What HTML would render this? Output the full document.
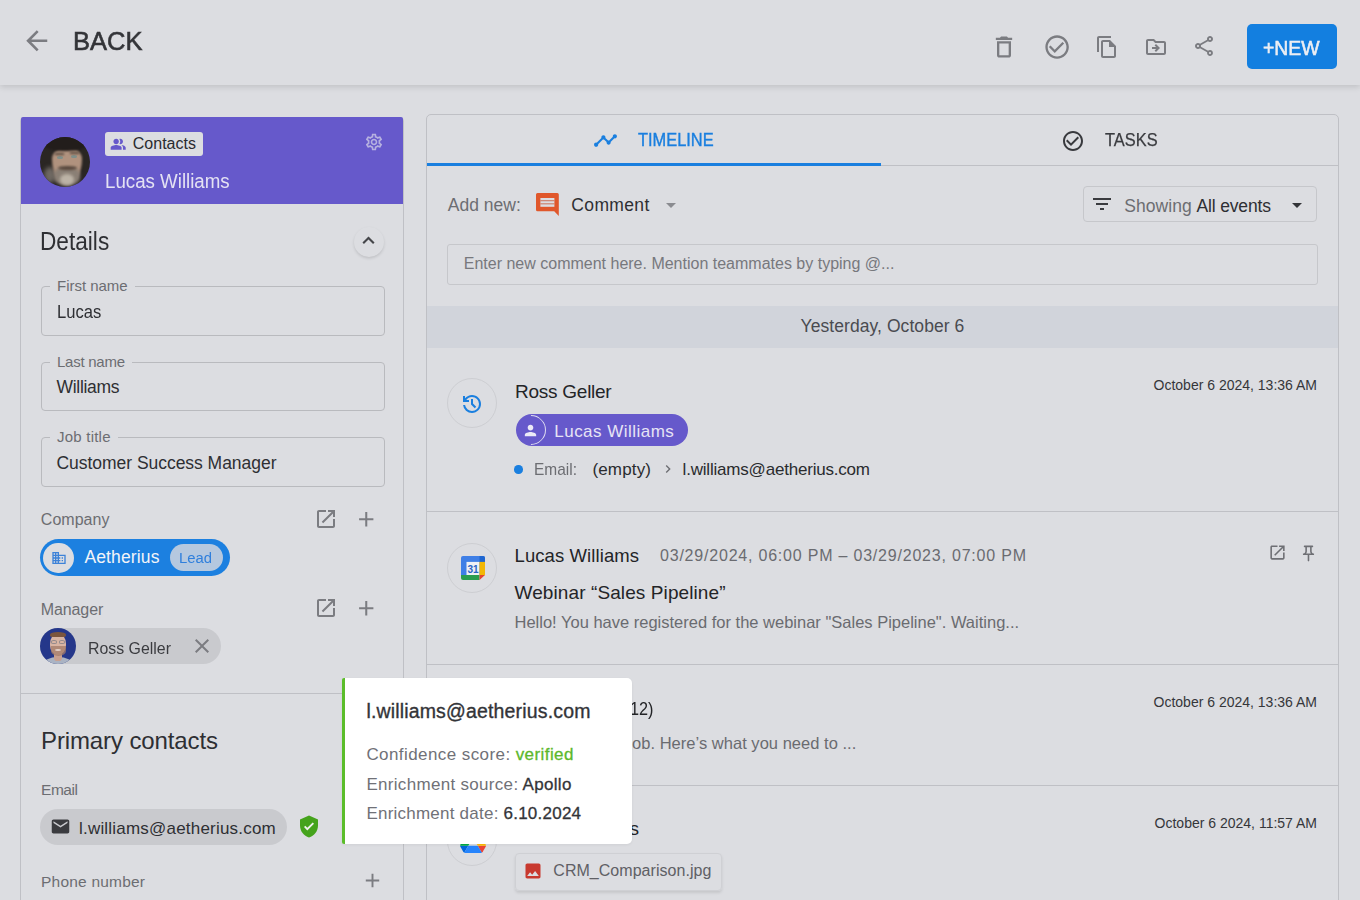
<!DOCTYPE html>
<html><head><meta charset="utf-8"><style>
html,body{margin:0;padding:0;width:1360px;height:900px;overflow:hidden;background:#dcdde1;font-family:"Liberation Sans", sans-serif;}
.t{position:absolute;white-space:pre;}
svg{display:block}
</style></head><body>
<div style="position:absolute;left:0px;top:0px;width:1360px;height:85px;background:#dcdde1;box-shadow:0 2px 6px rgba(0,0,0,0.13)"></div>
<svg style="position:absolute;left:20.5px;top:24.8px;width:31.5px;height:31.5px" viewBox="0 0 24 24" preserveAspectRatio="none"><path fill="#7b7c81" d="M20 11H7.83l5.59-5.59L12 4l-8 8 8 8 1.41-1.41L7.83 13H20v-2z"/></svg>
<div class="t" style="top:28.27px;font-size:26.5px;line-height:26.5px;color:#333438;left:72.60px;transform:scaleX(0.9630);transform-origin:0 0;-webkit-text-stroke:0.6px #333438;">BACK</div>
<svg style="position:absolute;left:990.2px;top:32.5px;width:28px;height:28px" viewBox="0 0 24 24" preserveAspectRatio="none"><path fill="#7b7c81" d="M6 19c0 1.1.9 2 2 2h8c1.1 0 2-.9 2-2V7H6v12zM8 9h8v10H8V9zm7.5-5l-1-1h-5l-1 1H5v2h14V4z"/></svg>
<svg style="position:absolute;left:1042.6px;top:32.6px;width:28.2px;height:28.2px" viewBox="0 0 24 24" preserveAspectRatio="none"><path fill="#7b7c81" d="M16.59 7.58L10 14.17l-3.59-3.58L5 12l5 5 8-8zM12 2C6.48 2 2 6.48 2 12s4.48 10 10 10 10-4.48 10-10S17.52 2 12 2zm0 18c-4.42 0-8-3.58-8-8s3.58-8 8-8 8 3.58 8 8-3.58 8-8 8z"/></svg>
<svg style="position:absolute;left:1095px;top:34.5px;width:24px;height:24px" viewBox="0 0 24 24" preserveAspectRatio="none"><path fill="#7b7c81" d="M16 1H4c-1.1 0-2 .9-2 2v14h2V3h12V1zm-1 4H8c-1.1 0-1.99.9-1.99 2L6 21c0 1.1.89 2 1.99 2H19c1.1 0 2-.9 2-2V11l-6-6zM8 21V7h6v5h5v9H8z"/></svg>
<svg style="position:absolute;left:1144px;top:34.7px;width:24px;height:24px" viewBox="0 0 24 24" preserveAspectRatio="none"><path fill="#7b7c81" d="M20 6h-8l-2-2H4c-1.1 0-1.99.9-1.99 2L2 18c0 1.1.9 2 2 2h16c1.1 0 2-.9 2-2V8c0-1.1-.9-2-2-2zm0 12H4V6h5.17l2 2H20v10zm-7.84-6H8v2h4.16l-1.59 1.59L11.99 17 16 13.01 11.99 9l-1.41 1.41L12.16 12z"/></svg>
<svg style="position:absolute;left:1192px;top:34px;width:24px;height:24px" viewBox="0 0 24 24" preserveAspectRatio="none"><path fill="#7b7c81" d="M18 16.08c-.76 0-1.44.3-1.96.77L8.91 12.7c.05-.23.09-.46.09-.7s-.04-.47-.09-.7l7.05-4.11c.54.5 1.25.81 2.04.81 1.66 0 3-1.34 3-3s-1.34-3-3-3-3 1.34-3 3c0 .24.04.47.09.7L8.04 9.81C7.5 9.31 6.79 9 6 9c-1.66 0-3 1.34-3 3s1.34 3 3 3c.79 0 1.5-.31 2.04-.81l7.12 4.16c-.05.21-.08.43-.08.65 0 1.61 1.31 2.92 2.92 2.92s2.92-1.31 2.92-2.92-1.31-2.92-2.92-2.92zM18 4c.55 0 1 .45 1 1s-.45 1-1 1-1-.45-1-1 .45-1 1-1zM6 13c-.55 0-1-.45-1-1s.45-1 1-1 1 .45 1 1-.45 1-1 1zm12 7.02c-.55 0-1-.45-1-1s.45-1 1-1 1 .45 1 1-.45 1-1 1z"/></svg>
<div style="position:absolute;left:1246.5px;top:24px;width:90.5px;height:45px;background:#137fe0;border-radius:5px"></div>
<div class="t" style="top:37.22px;font-size:21px;line-height:21px;color:#eceef3;left:1263.00px;transform:scaleX(0.9238);transform-origin:0 0;-webkit-text-stroke:0.6px #eceef3;">+NEW</div>
<div style="position:absolute;left:20px;top:117px;width:384px;height:800px;border:1px solid #bfc0c5;border-radius:4px 4px 0 0;box-sizing:border-box"></div>
<div style="position:absolute;left:21px;top:117px;width:382px;height:87px;background:#6659cb;border-radius:2px 2px 0 0"></div>
<div style="position:absolute;left:40px;top:137px;width:50px;height:50px;border-radius:50%;overflow:hidden;background:#2a2623"><div style="position:absolute;left:4px;top:30px;width:12px;height:16px;border-radius:50%;background:#6e6862;filter:blur(2px)"></div><div style="position:absolute;left:12px;top:11px;width:30px;height:36px;border-radius:42% 42% 50% 50% / 30% 30% 70% 70%;background:#b0927e;filter:blur(1px)"></div><div style="position:absolute;left:14px;top:31px;width:26px;height:18px;border-radius:30% 30% 50% 50%;background:#8a7f75;filter:blur(1.5px)"></div><div style="position:absolute;left:20px;top:37px;width:14px;height:11px;border-radius:50%;background:#bcb3a6;filter:blur(1.5px)"></div><div style="position:absolute;left:18px;top:29px;width:19px;height:4px;border-radius:50%;background:#5a493e;filter:blur(0.8px)"></div><div style="position:absolute;left:3px;top:-3px;width:44px;height:17px;border-radius:0 0 45% 45%;background:#221d1b;filter:blur(0.8px)"></div><div style="position:absolute;left:17px;top:19px;width:6px;height:3px;border-radius:50%;background:#7f8f8a;filter:blur(0.4px)"></div><div style="position:absolute;left:31px;top:18px;width:6px;height:3px;border-radius:50%;background:#7f8f8a;filter:blur(0.4px)"></div><div style="position:absolute;left:15px;top:16px;width:9px;height:2px;background:#5a4a40;filter:blur(0.9px)"></div><div style="position:absolute;left:30px;top:15px;width:9px;height:2px;background:#5a4a40;filter:blur(0.9px)"></div></div>
<div style="position:absolute;left:105px;top:132px;width:98px;height:24px;background:#dcdde1;border-radius:3px"></div>
<svg style="position:absolute;left:109.6px;top:136.2px;width:16.4px;height:16.4px" viewBox="0 0 24 24" preserveAspectRatio="none"><path fill="#6659cb" d="M16.67 13.13C18.04 14.06 19 15.32 19 17v3h4v-3c0-2.18-3.57-3.47-6.33-3.87zM9 12c2.21 0 4-1.79 4-4S11.21 4 9 4 5 5.79 5 8s1.79 4 4 4zm6 0c2.21 0 4-1.79 4-4s-1.79-4-4-4c-.47 0-.91.1-1.33.24C14.5 5.27 15 6.58 15 8s-.5 2.73-1.33 3.76c.42.14.86.24 1.33.24zm-6 1c-2.67 0-8 1.34-8 4v3h16v-3c0-2.66-5.33-4-8-4z"/></svg>
<div class="t" style="top:136.46px;font-size:16px;line-height:16px;color:#2a2b2f;left:132.80px;">Contacts</div>
<div class="t" style="top:171.47px;font-size:20px;line-height:20px;color:#e4e2f3;left:104.80px;transform:scaleX(0.9351);transform-origin:0 0;">Lucas Williams</div>
<svg style="position:absolute;left:364px;top:132px;width:20px;height:20px" viewBox="0 0 24 24" preserveAspectRatio="none"><path fill="#b6b1e0" d="M19.43 12.98c.04-.32.07-.64.07-.98 0-.34-.03-.66-.07-.98l2.11-1.65c.19-.15.24-.42.12-.64l-2-3.46c-.09-.16-.26-.25-.44-.25-.06 0-.12.01-.17.03l-2.49 1c-.52-.4-1.08-.73-1.69-.98l-.38-2.65C14.46 2.18 14.25 2 14 2h-4c-.25 0-.46.18-.49.42l-.38 2.65c-.61.25-1.17.59-1.69.98l-2.490-1c-.06-.02-.12-.03-.18-.03-.17 0-.34.09-.43.25l-2 3.46c-.13.22-.07.49.12.64l2.11 1.65c-.04.32-.07.65-.07.98 0 .33.03.66.07.98l-2.11 1.65c-.19.15-.24.42-.12.64l2 3.46c.09.16.26.25.44.25.06 0 .12-.01.17-.03l2.49-1c.52.4 1.08.73 1.69.98l.38 2.65c.03.24.24.42.49.42h4c.25 0 .46-.18.49-.42l.38-2.65c.61-.25 1.17-.59 1.69-.98l2.49 1c.06.02.12.03.18.03.17 0 .34-.09.43-.25l2-3.46c.12-.22.07-.49-.12-.64l-2.11-1.65zm-1.98-1.71c.04.31.05.52.05.73 0 .21-.02.43-.05.73l-.14 1.13.89.7 1.08.84-.7 1.21-1.27-.51-1.04-.42-.9.68c-.43.32-.84.56-1.25.73l-1.06.43-.16 1.13-.2 1.35h-1.4l-.19-1.35-.16-1.13-1.06-.43c-.43-.18-.83-.41-1.230-.71l-.91-.7-1.06.43-1.27.51-.7-1.21 1.08-.84.89-.7-.14-1.13c-.03-.31-.05-.54-.05-.74s.02-.43.05-.73l.14-1.13-.89-.7-1.08-.84.7-1.21 1.27.51 1.04.42.9-.68c.43-.32.84-.56 1.25-.73l1.06-.43.16-1.13.2-1.35h1.39l.19 1.35.16 1.13 1.06.43c.43.18.83.41 1.23.71l.91.7 1.06-.43 1.27-.51.7 1.21-1.07.85-.89.7.14 1.13zM12 8c-2.21 0-4 1.79-4 4s1.79 4 4 4 4-1.79 4-4-1.79-4-4-4zm0 6c-1.1 0-2-.9-2-2s.9-2 2-2 2 .9 2 2-.9 2-2 2z"/></svg>
<div class="t" style="top:228.84px;font-size:25px;line-height:25px;color:#2e2f33;left:40.40px;transform:scaleX(0.9055);transform-origin:0 0;">Details</div>
<div style="position:absolute;left:353.5px;top:227px;width:30px;height:30px;border-radius:50%;background:#dcdde1;box-shadow:0 1.5px 3px rgba(0,0,0,0.13)"></div>
<svg style="position:absolute;left:360px;top:233px;width:17px;height:13px" viewBox="0 0 17 13"><path d="M3.2 10.3L8.5 5l5.3 5.3" fill="none" stroke="#45464a" stroke-width="2.1"/></svg>
<div style="position:absolute;left:40.5px;top:286px;width:344px;height:49.5px;border:1.5px solid #b9babe;border-radius:4px;box-sizing:border-box"></div>
<div style="position:absolute;left:50px;top:283px;width:84.7px;height:6px;background:#dcdde1"></div>
<div class="t" style="top:278.30px;font-size:15px;line-height:15px;color:#6c6d72;letter-spacing:-0.018px;left:57.00px;">First name</div>
<div class="t" style="top:303.69px;font-size:17.5px;line-height:17.5px;color:#2e2f33;left:56.50px;transform:scaleX(0.9485);transform-origin:0 0;">Lucas</div>
<div style="position:absolute;left:40.5px;top:361.5px;width:344px;height:49.5px;border:1.5px solid #b9babe;border-radius:4px;box-sizing:border-box"></div>
<div style="position:absolute;left:50px;top:358.5px;width:82px;height:6px;background:#dcdde1"></div>
<div class="t" style="top:353.80px;font-size:15px;line-height:15px;color:#6c6d72;letter-spacing:-0.256px;left:57.00px;">Last name</div>
<div class="t" style="top:379.19px;font-size:17.5px;line-height:17.5px;color:#2e2f33;letter-spacing:-0.306px;left:56.50px;">Williams</div>
<div style="position:absolute;left:40.5px;top:437px;width:344px;height:49.5px;border:1.5px solid #b9babe;border-radius:4px;box-sizing:border-box"></div>
<div style="position:absolute;left:50px;top:434px;width:67.5px;height:6px;background:#dcdde1"></div>
<div class="t" style="top:429.30px;font-size:15px;line-height:15px;color:#6c6d72;letter-spacing:0.225px;left:57.00px;">Job title</div>
<div class="t" style="top:454.69px;font-size:17.5px;line-height:17.5px;color:#2e2f33;letter-spacing:-0.035px;left:56.50px;">Customer Success Manager</div>
<div class="t" style="top:512.26px;font-size:16px;line-height:16px;color:#6c6d72;letter-spacing:0.036px;left:40.80px;">Company</div>
<svg style="position:absolute;left:314px;top:507px;width:24px;height:24px" viewBox="0 0 24 24" preserveAspectRatio="none"><path fill="#7b7c81" d="M19 19H5V5h7V3H5c-1.11 0-2 .9-2 2v14c0 1.1.89 2 2 2h14c1.1 0 2-.9 2-2v-7h-2v7zM14 3v2h3.59l-9.83 9.83 1.41 1.41L19 6.41V10h2V3h-7z"/></svg>
<svg style="position:absolute;left:354.3px;top:506.5px;width:24.5px;height:24.5px" viewBox="0 0 24 24" preserveAspectRatio="none"><path fill="#7b7c81" d="M19 13h-6v6h-2v-6H5v-2h6V5h2v6h6v2z"/></svg>
<div style="position:absolute;left:40px;top:539px;width:190px;height:37px;background:#1c80e0;border-radius:19px"></div>
<div style="position:absolute;left:43px;top:542.5px;width:30.5px;height:30.5px;background:#dcdde1;border-radius:50%"></div>
<svg style="position:absolute;left:50.5px;top:550px;width:16px;height:16px" viewBox="0 0 24 24" preserveAspectRatio="none"><path fill="#3d82d8" d="M12 7V3H2v18h20V7H10zM6 19H4v-2h2v2zm0-4H4v-2h2v2zm0-4H4V9h2v2zm0-4H4V5h2v2zm4 12H8v-2h2v2zm0-4H8v-2h2v2zm0-4H8V9h2v2zm0-4H8V5h2v2zm10 12h-8v-2h2v-2h-2v-2h2v-2h-2V9h8v10zm-2-8h-2v2h2v-2zm0 4h-2v2h2v-2z"/></svg>
<div class="t" style="top:549.49px;font-size:17.5px;line-height:17.5px;color:#f2f4f8;letter-spacing:0.133px;left:84.40px;">Aetherius</div>
<div style="position:absolute;left:170px;top:544px;width:52.5px;height:26.5px;background:#b5c8df;border-radius:14px"></div>
<div class="t" style="top:550.38px;font-size:15.5px;line-height:15.5px;color:#2f7fdc;left:178.50px;transform:scaleX(0.9570);transform-origin:0 0;">Lead</div>
<div class="t" style="top:601.66px;font-size:16px;line-height:16px;color:#6c6d72;letter-spacing:-0.093px;left:40.70px;">Manager</div>
<svg style="position:absolute;left:314px;top:595.5px;width:24px;height:24px" viewBox="0 0 24 24" preserveAspectRatio="none"><path fill="#7b7c81" d="M19 19H5V5h7V3H5c-1.11 0-2 .9-2 2v14c0 1.1.89 2 2 2h14c1.1 0 2-.9 2-2v-7h-2v7zM14 3v2h3.59l-9.83 9.83 1.41 1.41L19 6.41V10h2V3h-7z"/></svg>
<svg style="position:absolute;left:354.3px;top:595.5px;width:24.5px;height:24.5px" viewBox="0 0 24 24" preserveAspectRatio="none"><path fill="#7b7c81" d="M19 13h-6v6h-2v-6H5v-2h6V5h2v6h6v2z"/></svg>
<div style="position:absolute;left:40px;top:628px;width:181px;height:36px;background:#c9cace;border-radius:18px"></div>
<div style="position:absolute;left:40px;top:628px;width:36px;height:36px;border-radius:50%;overflow:hidden;background:#25378a"><div style="position:absolute;left:3px;top:29px;width:30px;height:16px;border-radius:50% 50% 0 0;background:#aab3c3;filter:blur(0.5px)"></div><div style="position:absolute;left:14px;top:24px;width:8px;height:9px;border-radius:0 0 40% 40%;background:#c7a090;filter:blur(0.4px)"></div><div style="position:absolute;left:10px;top:5px;width:16px;height:22px;border-radius:50% 50% 45% 45%;background:#d8b4a3;filter:blur(0.4px)"></div><div style="position:absolute;left:10.5px;top:18px;width:15px;height:10px;border-radius:0 0 50% 50%;background:#a37b68;opacity:0.75;filter:blur(0.7px)"></div><div style="position:absolute;left:15px;top:21px;width:6px;height:2px;border-radius:50%;background:#e3d0c7;filter:blur(0.5px)"></div><div style="position:absolute;left:10px;top:3.5px;width:16px;height:5px;border-radius:50% 50% 30% 30%;background:#7b553d;filter:blur(0.4px)"></div><div style="position:absolute;left:11px;top:11.5px;width:6px;height:4px;box-sizing:border-box;border:1px solid #7f7d86;border-radius:40%;opacity:0.75"></div><div style="position:absolute;left:19px;top:11.5px;width:6px;height:4px;box-sizing:border-box;border:1px solid #7f7d86;border-radius:40%;opacity:0.75"></div></div>
<div class="t" style="top:640.01px;font-size:17px;line-height:17px;color:#3b3c40;left:87.60px;transform:scaleX(0.9346);transform-origin:0 0;">Ross Geller</div>
<svg style="position:absolute;left:190px;top:634px;width:24px;height:24px" viewBox="0 0 24 24" preserveAspectRatio="none"><path fill="#7b7c81" d="M19 6.41L17.59 5 12 10.59 6.41 5 5 6.41 10.59 12 5 17.59 6.41 19 12 13.41 17.59 19 19 17.59 13.41 12z"/></svg>
<div style="position:absolute;left:21px;top:693px;width:382px;height:1px;background:#bfc0c5"></div>
<div class="t" style="top:728.68px;font-size:24px;line-height:24px;color:#2e2f33;letter-spacing:-0.115px;left:41.00px;">Primary contacts</div>
<div class="t" style="top:781.78px;font-size:15.5px;line-height:15.5px;color:#6c6d72;letter-spacing:-0.441px;left:41.00px;">Email</div>
<div style="position:absolute;left:40px;top:809px;width:247px;height:36px;background:#c9cace;border-radius:18px"></div>
<svg style="position:absolute;left:50px;top:816.2px;width:21px;height:21px" viewBox="0 0 24 24" preserveAspectRatio="none"><path fill="#3a3b3f" d="M20 4H4c-1.1 0-1.99.9-1.99 2L2 18c0 1.1.9 2 2 2h16c1.1 0 2-.9 2-2V6c0-1.1-.9-2-2-2zm0 4l-8 5-8-5V6l8 5 8-5v2z"/></svg>
<div class="t" style="top:820.11px;font-size:17px;line-height:17px;color:#2e2f33;letter-spacing:0.203px;left:79.00px;">l.williams@aetherius.com</div>
<svg style="position:absolute;left:297px;top:814px;width:24px;height:25px" viewBox="0 0 24 24"><path fill="#45a31c" d="M12 1L3 5v6c0 5.55 3.84 10.74 9 12 5.16-1.26 9-6.45 9-12V5l-9-4z"/><path fill="#f0f2ee" d="M10.3 15.9l-3.3-3.3 1.3-1.3 2 2 5.4-5.4 1.3 1.3z"/></svg>
<div class="t" style="top:873.88px;font-size:15.5px;line-height:15.5px;color:#6c6d72;letter-spacing:0.210px;left:41.00px;">Phone number</div>
<svg style="position:absolute;left:361px;top:869px;width:23px;height:23px" viewBox="0 0 24 24" preserveAspectRatio="none"><path fill="#7b7c81" d="M19 13h-6v6h-2v-6H5v-2h6V5h2v6h6v2z"/></svg>
<div style="position:absolute;left:426px;top:114px;width:912.5px;height:800px;border:1px solid #bfc0c5;border-radius:5px 5px 0 0;box-sizing:border-box"></div>
<div style="position:absolute;left:427px;top:165px;width:911px;height:1px;background:#bfc0c5"></div>
<div style="position:absolute;left:427px;top:162.5px;width:454px;height:3.5px;background:#1a7fdf"></div>
<svg style="position:absolute;left:592.8px;top:128px;width:25px;height:25px" viewBox="0 0 24 24" preserveAspectRatio="none"><path fill="#1a7fdf" d="M23 8c0 1.1-.9 2-2 2-.18 0-.35-.02-.51-.07l-3.56 3.55c.05.16.07.34.07.52 0 1.1-.9 2-2 2s-2-.9-2-2c0-.18.02-.36.07-.52l-2.55-2.55c-.16.05-.34.07-.52.07s-.36-.02-.52-.07l-4.55 4.56c.05.16.07.33.07.51 0 1.1-.9 2-2 2s-2-.9-2-2 .9-2 2-2c.18 0 .35.02.51.07l4.56-4.55C8.02 9.36 8 9.18 8 9c0-1.1.9-2 2-2s2 .9 2 2c0 .18-.02.36-.07.52l2.55 2.55c.16-.05.34-.07.52-.07s.36.02.52.07l3.55-3.56C19.02 8.35 19 8.18 19 8c0-1.1.9-2 2-2s2 .9 2 2z"/></svg>
<div class="t" style="top:131.36px;font-size:18px;line-height:18px;color:#1a7fdf;left:638.40px;transform:scaleX(0.9107);transform-origin:0 0;-webkit-text-stroke:0.4px #1a7fdf;">TIMELINE</div>
<svg style="position:absolute;left:1060.5px;top:128.5px;width:24px;height:24px" viewBox="0 0 24 24" preserveAspectRatio="none"><path fill="#38393d" d="M16.59 7.58L10 14.17l-3.59-3.58L5 12l5 5 8-8zM12 2C6.48 2 2 6.48 2 12s4.48 10 10 10 10-4.48 10-10S17.52 2 12 2zm0 18c-4.42 0-8-3.58-8-8s3.58-8 8-8 8 3.58 8 8-3.58 8-8 8z"/></svg>
<div class="t" style="top:132.09px;font-size:17.5px;line-height:17.5px;color:#3a3b3f;left:1105.40px;transform:scaleX(0.9377);transform-origin:0 0;-webkit-text-stroke:0.25px #3a3b3f;">TASKS</div>
<div class="t" style="top:196.59px;font-size:17.5px;line-height:17.5px;color:#6c6d72;left:447.80px;">Add new:</div>
<svg style="position:absolute;left:535.6px;top:192.6px;width:23px;height:23px" viewBox="0 0 23 23"><path d="M1.5 0h19.8a1.5 1.5 0 0 1 1.5 1.5V23l-4.6-4.8H1.5A1.5 1.5 0 0 1 0 16.7V1.5A1.5 1.5 0 0 1 1.5 0z" fill="#e0572b"/><rect x="4.4" y="5" width="14" height="8.8" fill="#dcdde1"/><rect x="4.4" y="7.3" width="14" height="0.9" fill="#c8654a"/><rect x="4.4" y="10.4" width="14" height="0.9" fill="#c8654a"/></svg>
<div class="t" style="top:196.59px;font-size:17.5px;line-height:17.5px;color:#2e2f33;letter-spacing:0.357px;left:571.30px;">Comment</div>
<svg style="position:absolute;left:659px;top:193px;width:24px;height:24px" viewBox="0 0 24 24" preserveAspectRatio="none"><path fill="#8a8b90" d="M7 10l5 5 5-5z"/></svg>
<div style="position:absolute;left:1082.5px;top:186px;width:234.5px;height:36px;border:1px solid #c6c7cb;border-radius:4px;box-sizing:border-box"></div>
<svg style="position:absolute;left:1090px;top:192px;width:24px;height:24px" viewBox="0 0 24 24" preserveAspectRatio="none"><path fill="#3a3b3f" d="M10 18h4v-2h-4v2zM3 6v2h18V6H3zm3 7h12v-2H6v2z"/></svg>
<div class="t" style="top:197.89px;font-size:17.5px;line-height:17.5px;color:#6c6d72;letter-spacing:0.077px;left:1124.20px;">Showing</div>
<div class="t" style="top:197.89px;font-size:17.5px;line-height:17.5px;color:#2e2f33;letter-spacing:-0.153px;left:1196.50px;">All events</div>
<svg style="position:absolute;left:1285px;top:193px;width:24px;height:24px" viewBox="0 0 24 24" preserveAspectRatio="none"><path fill="#333438" d="M7 10l5 5 5-5z"/></svg>
<div style="position:absolute;left:446.8px;top:243.5px;width:871.2px;height:41px;border:1px solid #c6c7cb;border-radius:3px;box-sizing:border-box"></div>
<div class="t" style="top:255.71px;font-size:16px;line-height:16px;color:#77787d;left:463.75px;">Enter new comment here. Mention teammates by typing @...</div>
<div style="position:absolute;left:427px;top:305.5px;width:911px;height:42px;background:#d1d4db"></div>
<div class="t" style="top:318.49px;font-size:17.5px;line-height:17.5px;color:#4a4b50;letter-spacing:0.065px;left:800.60px;">Yesterday, October 6</div>
<div style="position:absolute;left:447px;top:378px;width:50px;height:50px;border:1px solid #cdced2;border-radius:50%;box-sizing:border-box"></div>
<svg style="position:absolute;left:460px;top:391.8px;width:24px;height:24px" viewBox="0 -960 960 960"><path fill="#1a7fdf" d="M480-120q-138 0-240.5-91.5T122-440h82q14 104 92.5 172T480-200q117 0 198.5-81.5T760-480q0-117-81.5-198.5T480-760q-69 0-129 32t-101 88h110v80H120v-240h80v94q51-64 124.5-99T480-840q75 0 140.5 28.5t114 77q48.5 48.5 77 114T840-480q0 75-28.5 140.5t-77 114q-48.5 48.5-114 77T480-120Zm112-192L440-464v-216h80v184l128 128-56 56Z"/></svg>
<div class="t" style="top:381.62px;font-size:19px;line-height:19px;color:#232427;letter-spacing:-0.255px;left:515.00px;">Ross Geller</div>
<div class="t" style="top:377.95px;font-size:14px;line-height:14px;color:#35363a;right:43.00px;">October 6 2024, 13:36 AM</div>
<div style="position:absolute;left:516px;top:414px;width:172px;height:31.5px;background:#6659cb;border-radius:16px"></div>
<div style="position:absolute;left:516px;top:414.5px;width:30px;height:30px;border-radius:50%;border:1.8px solid #dedcf0;border-left-color:transparent;border-bottom-color:transparent;transform:rotate(45deg);box-sizing:border-box"></div>
<svg style="position:absolute;left:521.8px;top:421.5px;width:17px;height:17px" viewBox="0 0 24 24" preserveAspectRatio="none"><path fill="#eceaf7" d="M12 12c2.21 0 4-1.790 4-4s-1.79-4-4-4-4 1.79-4 4 1.79 4 4 4zm0 2c-2.67 0-8 1.34-8 4v2h16v-2c0-2.66-5.33-4-8-4z"/></svg>
<div class="t" style="top:422.81px;font-size:17px;line-height:17px;color:#e6e4f5;letter-spacing:0.472px;left:554.30px;">Lucas Williams</div>
<div style="position:absolute;left:514px;top:465px;width:8.5px;height:8.5px;background:#1a7fdf;border-radius:50%"></div>
<div class="t" style="top:461.11px;font-size:17px;line-height:17px;color:#6c6d72;left:534.20px;transform:scaleX(0.9104);transform-origin:0 0;">Email:</div>
<div class="t" style="top:461.11px;font-size:17px;line-height:17px;color:#2a2b2e;letter-spacing:0.163px;left:592.40px;">(empty)</div>
<svg style="position:absolute;left:660px;top:461px;width:16px;height:16px" viewBox="0 0 24 24" preserveAspectRatio="none"><path fill="#6c6d72" d="M10 6L8.59 7.41 13.17 12l-4.58 4.59L10 18l6-6z"/></svg>
<div class="t" style="top:461.11px;font-size:17px;line-height:17px;color:#2a2b2e;letter-spacing:-0.201px;left:682.60px;">l.williams@aetherius.com</div>
<div style="position:absolute;left:427px;top:511px;width:911px;height:1px;background:#bfc0c5"></div>
<div style="position:absolute;left:447px;top:543px;width:50px;height:50px;border:1px solid #cdced2;border-radius:50%;box-sizing:border-box"></div>
<svg style="position:absolute;left:460.5px;top:556px;width:24px;height:24px" viewBox="0 0 24 24"><path d="M2 0h20a2 2 0 0 1 2 2v17.1H0V2a2 2 0 0 1 2-2z" fill="#3f7fe6"/><path d="M18.5 0h3.5a2 2 0 0 1 2 2v3.9h-5.5z" fill="#1f66d0"/><rect x="5.5" y="5.9" width="13" height="13.2" fill="#eef1f5"/><rect x="18.5" y="5.9" width="5.5" height="13.2" fill="#f2b705"/><path d="M0 19.1h18.5V24H2a2 2 0 0 1-2-2z" fill="#2a9d4f"/><path d="M18.5 19.1h5.5L18.5 24z" fill="#e2452f"/><text x="12" y="16.6" font-size="10" font-family="Liberation Sans" font-weight="700" fill="#2a63c4" text-anchor="middle">31</text></svg>
<div class="t" style="top:546.74px;font-size:18.5px;line-height:18.5px;color:#232427;letter-spacing:0.088px;left:514.50px;">Lucas Williams</div>
<div class="t" style="top:547.96px;font-size:16px;line-height:16px;color:#6a6b70;letter-spacing:0.793px;left:660.00px;">03/29/2024, 06:00 PM – 03/29/2023, 07:00 PM</div>
<svg style="position:absolute;left:1267.5px;top:542.5px;width:19px;height:19px" viewBox="0 0 24 24" preserveAspectRatio="none"><path fill="#6e6f74" d="M19 19H5V5h7V3H5c-1.11 0-2 .9-2 2v14c0 1.1.89 2 2 2h14c1.1 0 2-.9 2-2v-7h-2v7zM14 3v2h3.59l-9.83 9.83 1.41 1.41L19 6.41V10h2V3h-7z"/></svg>
<svg style="position:absolute;left:1298.5px;top:543.5px;width:19px;height:19px" viewBox="0 0 24 24" preserveAspectRatio="none"><path fill="#6e6f74" d="M14 4v5c0 1.12.37 2.16 1 3H9c.65-.86 1-1.9 1-3V4h4m3-2H7c-.55 0-1 .45-1 1s.45 1 1 1h1v5c0 1.66-1.34 3-3 3v2h5.97v7l1 1 1-1v-7H19v-2c-1.66 0-3-1.34-3-3V4h1c.55 0 1-.45 1-1s-.45-1-1-1z"/></svg>
<div class="t" style="top:583.32px;font-size:19px;line-height:19px;color:#232427;letter-spacing:0.098px;left:514.50px;">Webinar “Sales Pipeline”</div>
<div class="t" style="top:614.03px;font-size:16.5px;line-height:16.5px;color:#6a6b70;left:514.50px;">Hello! You have registered for the webinar "Sales Pipeline". Waiting...</div>
<div style="position:absolute;left:427px;top:664px;width:911px;height:1px;background:#bfc0c5"></div>
<div style="position:absolute;left:447px;top:686px;width:50px;height:50px;border:1px solid #cdced2;border-radius:50%;box-sizing:border-box"></div>
<div class="t" style="top:699.54px;font-size:18.5px;line-height:18.5px;color:#232427;left:629.50px;transform:scaleX(0.8785);transform-origin:0 0;">12)</div>
<div class="t" style="top:695.15px;font-size:14px;line-height:14px;color:#35363a;right:43.00px;">October 6 2024, 13:36 AM</div>
<div class="t" style="top:735.33px;font-size:16.5px;line-height:16.5px;color:#6a6b70;letter-spacing:0.027px;left:632.00px;">ob. Here’s what you need to ...</div>
<div style="position:absolute;left:427px;top:784.5px;width:911px;height:1px;background:#bfc0c5"></div>
<div style="position:absolute;left:447px;top:816px;width:50px;height:50px;border:1px solid #cdced2;border-radius:50%;box-sizing:border-box"></div>
<svg style="position:absolute;left:459.5px;top:829.5px;width:26px;height:23px" viewBox="0 0 87 78"><path d="M6.6 66.85l3.85 6.65c.8 1.4 1.95 2.5 3.3 3.3L27.5 53H0c0 1.55.4 3.1 1.2 4.5z" fill="#0066da"/><path d="M43.65 25L29.9 1.2C28.55 2 27.4 3.1 26.6 4.5L1.2 48.5C.4 49.9 0 51.45 0 53h27.5z" fill="#00ac47"/><path d="M73.55 76.8c1.35-.8 2.5-1.9 3.3-3.3l1.6-2.75 7.65-13.25c.8-1.4 1.2-2.95 1.2-4.5H59.798l5.852 11.5z" fill="#ea4335"/><path d="M43.65 25L57.4 1.2C56.05.4 54.5 0 52.9 0H34.4c-1.6 0-3.15.45-4.5 1.2z" fill="#00832d"/><path d="M59.8 53H27.5L13.75 76.8c1.35.8 2.9 1.2 4.5 1.2h50.8c1.6 0 3.15-.45 4.5-1.2z" fill="#2684fc"/><path d="M73.4 26.5l-12.7-22c-.8-1.4-1.95-2.5-3.3-3.3L43.65 25 59.8 53h27.45c0-1.55-.4-3.1-1.2-4.5z" fill="#ffba00"/></svg>
<div class="t" style="top:820.34px;font-size:18.5px;line-height:18.5px;color:#232427;letter-spacing:0.088px;left:514.50px;">Lucas Williams</div>
<div class="t" style="top:816.15px;font-size:14px;line-height:14px;color:#35363a;right:43.00px;">October 6 2024, 11:57 AM</div>
<div style="position:absolute;left:514.5px;top:853px;width:207px;height:38px;border:1px solid #cfd0d4;border-radius:4px;box-sizing:border-box;box-shadow:0 2px 3px rgba(0,0,0,0.10)"></div>
<svg style="position:absolute;left:523px;top:861px;width:20px;height:20px" viewBox="0 0 24 24" preserveAspectRatio="none"><path fill="#c8392f" d="M21 19V5c0-1.1-.9-2-2-2H5c-1.1 0-2 .9-2 2v14c0 1.1.9 2 2 2h14c1.1 0 2-.9 2-2zM8.5 13.5l2.5 3.01L14.5 12l4.5 6H5l3.5-4.5z"/></svg>
<div class="t" style="top:863.06px;font-size:16px;line-height:16px;color:#5f6065;letter-spacing:0.036px;left:553.30px;">CRM_Comparison.jpg</div>
<div style="position:absolute;left:342px;top:678px;width:290px;height:166px;background:#ffffff;border-radius:2px 5px 5px 2px;border-left:3px solid #5bbd2a;box-sizing:border-box;box-shadow:0 1px 3px rgba(0,0,0,0.06)"></div>
<div class="t" style="top:702.49px;font-size:19.5px;line-height:19.5px;color:#333438;letter-spacing:0.162px;left:366.40px;-webkit-text-stroke:0.35px #333438;">l.williams@aetherius.com</div>
<div class="t" style="left:366.4px;top:746.21px;font-size:17px;line-height:17px;color:#707177;letter-spacing:0.42px">Confidence score: <span style="color:#5cb82c;-webkit-text-stroke:0.3px #5cb82c">verified</span></div>
<div class="t" style="left:366.4px;top:775.61px;font-size:17px;line-height:17px;color:#707177;letter-spacing:0.31px">Enrichment source: <span style="color:#333438;-webkit-text-stroke:0.3px #333438">Apollo</span></div>
<div class="t" style="left:366.4px;top:805.11px;font-size:17px;line-height:17px;color:#707177;letter-spacing:0.23px">Enrichment date: <span style="color:#333438;-webkit-text-stroke:0.3px #333438">6.10.2024</span></div>
</body></html>
